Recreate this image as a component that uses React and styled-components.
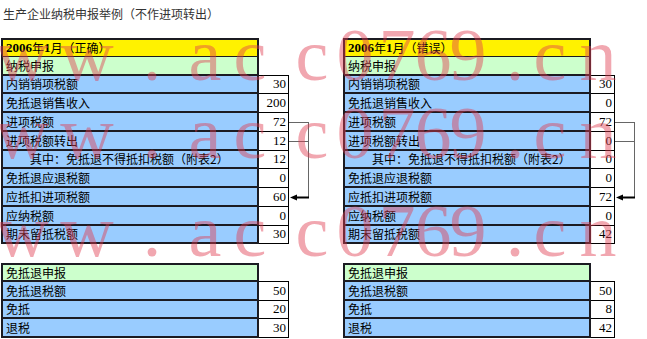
import React from "react";
import styled, { createGlobalStyle } from "styled-components";

const upperLeft = [
  { label: "内销销项税额", value: "30" },
  { label: "免抵退销售收入", value: "200" },
  { label: "进项税额", value: "72" },
  { label: "进项税额转出", value: "12" },
  { label: "其中：免抵退不得抵扣税额（附表2）", value: "12", indent: true },
  { label: "免抵退应退税额", value: "0" },
  { label: "应抵扣进项税额", value: "60" },
  { label: "应纳税额", value: "0" },
  { label: "期末留抵税额", value: "30" },
];

const upperRight = [
  { label: "内销销项税额", value: "30" },
  { label: "免抵退销售收入", value: "0" },
  { label: "进项税额", value: "72" },
  { label: "进项税额转出", value: "0" },
  { label: "其中：免抵退不得抵扣税额（附表2）", value: "0", indent: true },
  { label: "免抵退应退税额", value: "0" },
  { label: "应抵扣进项税额", value: "72" },
  { label: "应纳税额", value: "0" },
  { label: "期末留抵税额", value: "42" },
];

const lowerLeft = [
  { label: "免抵退税额", value: "50" },
  { label: "免抵", value: "20" },
  { label: "退税", value: "30" },
];

const lowerRight = [
  { label: "免抵退税额", value: "50" },
  { label: "免抵", value: "8" },
  { label: "退税", value: "42" },
];

// watermark letters: horizontal centre of each glyph
const mark = [
  [-40, "w"], [22, "w"], [87, "w"], [152, "."], [205, "a"], [250, "c"],
  [312, "c"], [355, "0"], [397, "7"], [433, "6"], [468, "9"], [515, "."],
  [550, "c"], [598, "n"],
];
const markRows = [80, 158, 256];

const ROW = 18.75;
const LINE = "#1b1b22";

function App() {
  return (
    <Page>
      <GlobalStyle />
      <Heading>生产企业纳税申报举例（不作进项转出）</Heading>
      <Columns>
        <Report
          lw={258}
          vw={30}
          verdict="正确"
          upper={upperLeft}
          lower={lowerLeft}
        />
        <Report
          lw={248}
          vw={24}
          verdict="错误"
          upper={upperRight}
          lower={lowerRight}
        />
      </Columns>
      <Watermark>
        {markRows.map((y) =>
          mark.map(([x, ch], i) => (
            <Glyph key={`${y}-${i}`} $x={x} $y={y}>
              {ch}
            </Glyph>
          ))
        )}
      </Watermark>
    </Page>
  );
}
export default App;

function Report({ lw, vw, verdict, upper, lower }) {
  return (
    <Group>
      <Sheet $lw={lw} $vw={vw}>
        <Label $tone="head" $first>
          <Bold>2006</Bold>年<Bold>1</Bold>月（{verdict}）
        </Label>
        <Label $tone="section">纳税申报</Label>
        {upper.map((row, i) => (
          <React.Fragment key={row.label}>
            <Label $tone="item" $indent={row.indent}>
              {row.label}
            </Label>
            <Value $first={i === 0}>{row.value}</Value>
          </React.Fragment>
        ))}
        <Bracket width="22" height="206" viewBox="0 0 22 206">
          <line x1="0" y1="84.5" x2="19.5" y2="84.5" stroke="#666" strokeWidth="1" />
          <line x1="0" y1="103.5" x2="19.5" y2="103.5" stroke="#666" strokeWidth="1" />
          <line x1="19.5" y1="84" x2="19.5" y2="160" stroke="#666" strokeWidth="1" />
          <line x1="6" y1="159.5" x2="20" y2="159.5" stroke="#000" strokeWidth="2" />
          <polygon points="1,159.5 8,156.5 8,162.5" fill="#000" />
        </Bracket>
      </Sheet>
      <Sheet $lw={lw} $vw={vw}>
        <Label $tone="section" $first>
          免抵退申报
        </Label>
        {lower.map((row, i) => (
          <React.Fragment key={row.label}>
            <Label $tone="item">{row.label}</Label>
            <Value $first={i === 0}>{row.value}</Value>
          </React.Fragment>
        ))}
      </Sheet>
    </Group>
  );
}

const GlobalStyle = createGlobalStyle`
  body {
    margin: 0;
    background: #fff;
  }
`;

const Page = styled.div`
  position: relative;
  width: 647px;
  height: 339px;
  overflow: hidden;
  font-family: "Noto Sans CJK SC", "Liberation Sans", sans-serif;
  color: #000;
`;

const Heading = styled.div`
  padding: 7px 0 0 3px;
  height: 14px;
  line-height: 14px;
  font-size: 12px;
  color: #333;
`;

const Columns = styled.div`
  display: flex;
  align-items: flex-start;
  gap: 54px;
  margin-top: 17px;
  padding-left: 1px;
`;

const Group = styled.div`
  display: flex;
  flex-direction: column;
  gap: ${ROW}px;
`;

const Sheet = styled.div`
  position: relative;
  display: grid;
  grid-template-columns: ${(p) => p.$lw}px ${(p) => p.$vw}px;
  grid-auto-rows: ${ROW}px;
  width: fit-content;
`;

const tones = {
  head: "#fff200",
  section: "#ccffcc",
  item: "#99ccff",
};

const Label = styled.div`
  grid-column: 1;
  display: flex;
  align-items: center;
  box-sizing: border-box;
  padding-left: ${(p) => (p.$indent ? "27px" : "3px")};
  background: ${(p) => tones[p.$tone]};
  border-left: 2px solid ${LINE};
  border-right: 2px solid ${LINE};
  border-top: ${(p) => (p.$first ? `2px solid ${LINE}` : "none")};
  border-bottom: ${(p) => (p.$tone === "head" ? "1px" : "2px")} solid ${LINE};
  font-size: 12px;
  white-space: nowrap;
  overflow: hidden;
`;

const Bold = styled.span`
  font-family: "Liberation Serif", serif;
  font-weight: bold;
  font-size: 13px;
`;

const Value = styled.div`
  grid-column: 2;
  display: flex;
  align-items: center;
  justify-content: flex-end;
  box-sizing: border-box;
  padding-right: 2px;
  background: #fff;
  border-right: 1px solid #000;
  border-bottom: 1px solid #000;
  border-top: ${(p) => (p.$first ? "1px solid #000" : "none")};
  margin-top: ${(p) => (p.$first ? "-1px" : "0")};
  font-family: "Liberation Serif", serif;
  font-size: 13px;
`;

const Bracket = styled.svg`
  position: absolute;
  left: 100%;
  top: 0;
  overflow: visible;
`;

const Watermark = styled.div`
  position: absolute;
  inset: 0;
  pointer-events: none;
`;

const Glyph = styled.span`
  position: absolute;
  left: ${(p) => p.$x}px;
  top: ${(p) => p.$y - 62}px;
  transform: translateX(-50%);
  font-family: "Liberation Serif", serif;
  font-size: 74px;
  line-height: 74px;
  color: rgba(225, 60, 80, 0.45);
`;
